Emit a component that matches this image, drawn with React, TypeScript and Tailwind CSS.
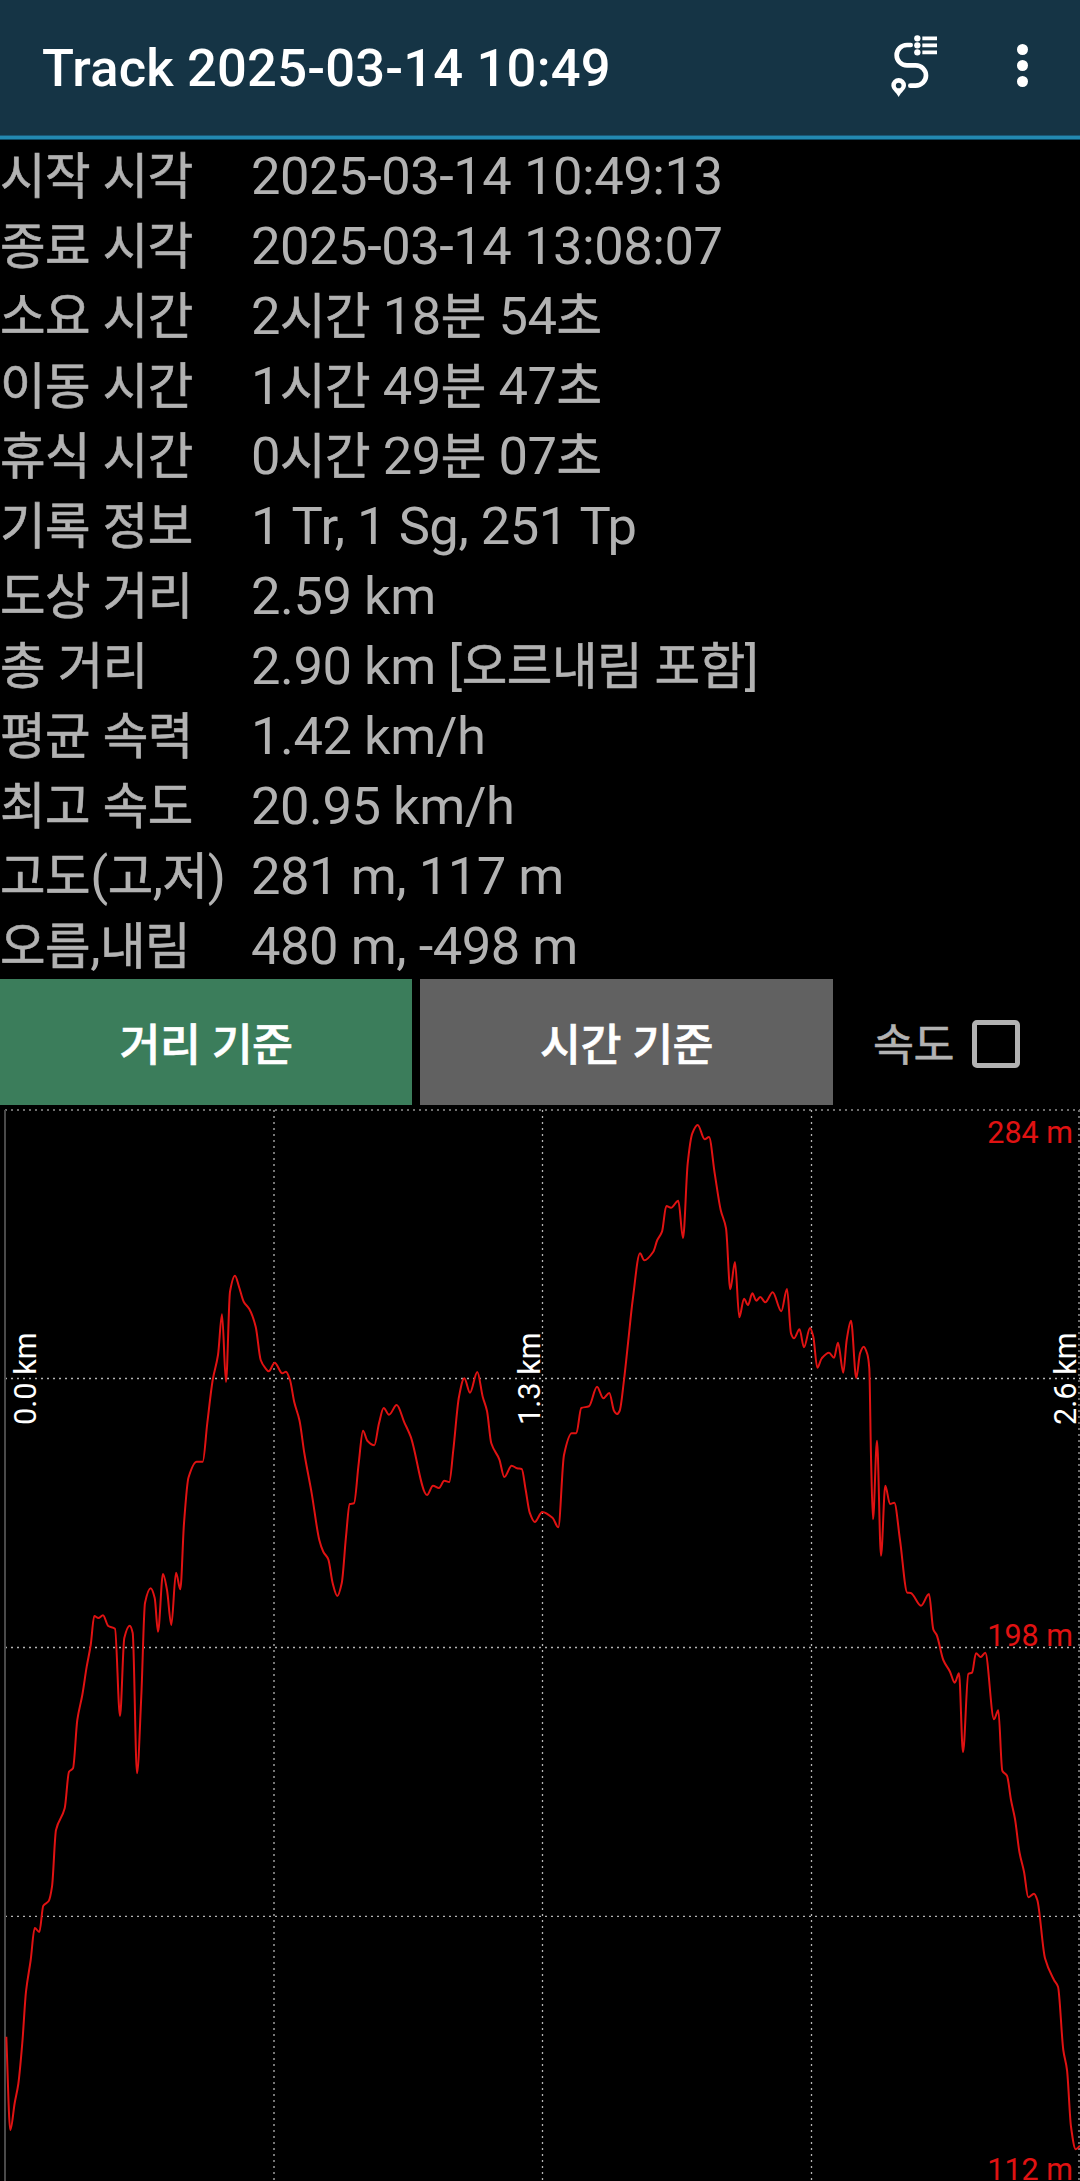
import React from "react";

type Point = [number, number];

const STATS: [string, string][] = [
  ["시작 시각", "2025-03-14 10:49:13"],
  ["종료 시각", "2025-03-14 13:08:07"],
  ["소요 시간", "2시간 18분 54초"],
  ["이동 시간", "1시간 49분 47초"],
  ["휴식 시간", "0시간 29분 07초"],
  ["기록 정보", "1 Tr, 1 Sg, 251 Tp"],
  ["도상 거리", "2.59 km"],
  ["총 거리", "2.90 km [오르내림 포함]"],
  ["평균 속력", "1.42 km/h"],
  ["최고 속도", "20.95 km/h"],
  ["고도(고,저)", "281 m, 117 m"],
  ["오름,내림", "480 m, -498 m"],
];

// Elevation samples along the track, in screen units; the chart starts at y = 1105.
const PROFILE: Point[] = [
  [6.3, 2036.7], [10.3, 2130], [14.7, 2103], [18.3, 2084], [22.3, 2043], [26, 1991.7], [30.7, 1960], [34.7, 1928],
  [39.3, 1932], [43.3, 1905.7], [48.7, 1901], [52, 1886.7], [56, 1830], [64.7, 1808.3], [69, 1771.7], [73, 1768.3],
  [77.3, 1720], [82.3, 1695], [86.7, 1666.7], [90.7, 1645], [94.3, 1616], [98.3, 1618], [103, 1615.3], [108.3, 1626],
  [115, 1628.7], [120, 1716], [124.3, 1638], [129.7, 1625.7], [132.7, 1633], [137, 1773.3], [141.3, 1696], [145, 1603],
  [150.7, 1588.3], [154.7, 1598], [158, 1631.7], [163, 1574], [167, 1590], [171.3, 1625], [176, 1572.7], [180.3, 1589.3],
  [184, 1523.3], [188.5, 1477.5], [196.7, 1461.7], [202.7, 1461.7], [207.3, 1423], [212.7, 1380], [218, 1355],
  [222, 1314.3], [226, 1382], [230, 1291.7], [235, 1275.7], [239, 1286.7], [243.7, 1301.7], [249.3, 1309],
  [255.7, 1326.7], [260.7, 1360], [265, 1367.7], [268.7, 1371.3], [274.7, 1362.7], [282.3, 1373.3], [286, 1371.7],
  [290, 1380], [294.3, 1402.3], [299.5, 1420.5], [304.3, 1453], [311.7, 1493.3], [319.3, 1540], [323.3, 1551.7],
  [328.3, 1559.3], [332.7, 1583.3], [337.3, 1596], [341.7, 1583.3], [346, 1536.7], [349.7, 1504], [354, 1503.3],
  [358.7, 1463.3], [363, 1430.7], [367.3, 1440.7], [374.3, 1445.3], [379, 1423.3], [383.7, 1408], [389, 1414.7],
  [396.7, 1405], [404.3, 1422.3], [410.7, 1436.7], [427, 1495], [433, 1485.7], [439, 1488], [444.3, 1480.7],
  [449.3, 1482], [453.3, 1450], [459, 1396.7], [464.3, 1378.3], [470, 1392.7], [477.3, 1372], [482.7, 1396.7],
  [487, 1411], [491.3, 1443.3], [499.3, 1459.3], [504.3, 1477], [511.7, 1465.7], [517, 1468.3], [521.7, 1469],
  [525.7, 1490], [529.7, 1512.7], [534.7, 1522], [542.3, 1512], [552.7, 1518], [558.3, 1527.3], [564, 1455],
  [571.7, 1433.3], [576.3, 1433.3], [581.3, 1408], [589, 1406.3], [597, 1386.7], [603.3, 1398.3], [609.3, 1393],
  [614, 1410.7], [617, 1414], [619.7, 1410.7], [624, 1380], [628, 1343.3], [632.7, 1300], [640, 1253.3],
  [644.3, 1260.3], [653.3, 1251.7], [657.3, 1240], [662, 1231.7], [666.3, 1206], [671, 1207.7], [678.3, 1200.7],
  [683, 1238], [687.7, 1163.3], [692.3, 1133.3], [697.7, 1125], [704.7, 1139.3], [709, 1137], [714.7, 1173.3],
  [720.7, 1210], [726, 1228.3], [730.3, 1289.3], [735, 1262], [739.3, 1317.3], [744, 1298.7], [748, 1305],
  [752.3, 1293.3], [756.3, 1300.7], [760.3, 1297], [765.3, 1302.3], [772.7, 1292.3], [781.3, 1311.3], [787, 1289],
  [791, 1333.3], [794, 1338.3], [799.5, 1329.3], [804, 1347.3], [810, 1328], [813.3, 1336.7], [817.3, 1367.7],
  [821.7, 1358.3], [829, 1352.7], [834, 1357.7], [838, 1342.7], [843.3, 1372.7], [846.7, 1340], [851, 1320.7],
  [856.3, 1378], [860, 1353.3], [863.7, 1346.7], [867.3, 1354], [869.3, 1368.3], [871, 1456.7], [873, 1519.3],
  [877, 1440.7], [881, 1555.7], [885.3, 1485.7], [890, 1504], [894.3, 1502.7], [900, 1540], [907.3, 1592.7],
  [910.7, 1593], [921, 1605.7], [929, 1594], [933.3, 1629.3], [936.7, 1635], [943.3, 1660], [950, 1671.7],
  [954.7, 1682.7], [959, 1673.3], [963, 1752.3], [968.3, 1674], [972, 1672.7], [976, 1653.3], [980.7, 1657],
  [985.3, 1652.7], [994, 1719.3], [998.3, 1710.3], [1002.3, 1770.7], [1007, 1775.7], [1011, 1800], [1015, 1819],
  [1019.5, 1852.5], [1024, 1871.7], [1028.3, 1897.3], [1034, 1893.7], [1037.3, 1900], [1045, 1958.3], [1054, 1980],
  [1058, 1986.7], [1063.3, 2050], [1067, 2070], [1071, 2126.7], [1075.7, 2149.3], [1080, 2145.7],
];

// Cubic path through all samples that never overshoots a local extreme.
function monotonePath(p: Point[]): string {
  const n = p.length;
  const slope = p.slice(1).map((q, i) => (q[1] - p[i][1]) / (q[0] - p[i][0]));
  const tangent = p.map((_, i) => {
    if (i === 0) return slope[0];
    if (i === n - 1) return slope[n - 2];
    const a = slope[i - 1];
    const b = slope[i];
    return a * b <= 0 ? 0 : (2 * a * b) / (a + b);
  });
  let d = `M${p[0][0]} ${p[0][1]}`;
  for (let i = 0; i < n - 1; i++) {
    const h = (p[i + 1][0] - p[i][0]) / 3;
    d += `C${p[i][0] + h} ${p[i][1] + tangent[i] * h} ${p[i + 1][0] - h} ${p[i + 1][1] - tangent[i + 1] * h} ${p[i + 1][0]} ${p[i + 1][1]}`;
  }
  return d;
}

// Sets Hangul runs slightly smaller and firmer than the Latin text beside them.
function Mixed({ text }: { text: string }) {
  return (
    <>
      {text.split(/([가-힣]+)/).map((part, i) =>
        i % 2 ? (
          <span key={i} className="text-[0.943em] [-webkit-text-stroke:0.6px_currentColor]">
            {part}
          </span>
        ) : (
          part
        ),
      )}
    </>
  );
}

function TrackIcon() {
  return (
    <svg className="h-[66px] w-[50px] overflow-visible" viewBox="0 0 150 198" fill="none">
      <path d="M77 45H66a31 30.500 0 0 0 0 61H92a31 30.500 0 0 1 0 61H76" stroke="#fff" strokeWidth="14" strokeLinecap="round" />
      <path d="M41 144a22 22 0 0 0-22 22c0 13 14 20 22 35 8-15 22-22 22-35a22 22 0 0 0-22-22zm0 14a8.500 8.500 0 1 1 0 17 8.500 8.500 0 0 1 0-17z" fill="#fff" fillRule="evenodd" />
      <circle cx="97" cy="25" r="9.500" fill="#fff" />
      <circle cx="97" cy="46" r="9.500" fill="#fff" />
      <circle cx="97" cy="67" r="9.500" fill="#fff" />
      <path d="M112 25h44M112 46h44M112 67h44" stroke="#fff" strokeWidth="11" />
    </svg>
  );
}

function Header() {
  return (
    <header className="bg-[#153445]">
      <div className="flex h-[135px] items-center pl-[42px]">
        <h1 className="flex-1 text-[52.5px] leading-[70px] font-medium tracking-[0.19px] text-white">
          Track 2025-03-14 10:49
        </h1>
        <button className="mr-[82px] mb-[9px]" aria-label="트랙 목록">
          <TrackIcon />
        </button>
        <button className="mr-[52px] mb-[4px] flex flex-col gap-[5px]" aria-label="메뉴">
          <span className="size-[11px] rounded-full bg-white" />
          <span className="size-[11px] rounded-full bg-white" />
          <span className="size-[11px] rounded-full bg-white" />
        </button>
      </div>
      <div className="h-[5px] border-y border-t-[#1b5876] border-b-[#0f4a63] bg-[#2389b1]" />
    </header>
  );
}

function Chart() {
  const red = "#e01212";
  return (
    <svg className="block h-[1076px] w-[1080px]" viewBox="0 1105 1080 1076">
      <g stroke="#b4b4b4" strokeWidth="1.300" strokeDasharray="2 4">
        <path d="M5 1378.500H1080M5 1647.500H1080M5 1916.300H1080" />
        <path d="M274 1110V2181M542.500 1110V2181M811.500 1110V2181" />
      </g>
      <g stroke="#6e6e6e" strokeWidth="2" strokeDasharray="2 4">
        <path d="M5 1110H1080M1079 1110V2181" />
      </g>
      <path d="M5 1110V2181" stroke="#4a4a4a" strokeWidth="2" />
      <path d={monotonePath(PROFILE)} fill="none" stroke={red} strokeWidth="2" strokeLinejoin="round" />
      <g fill={red} fontSize="30.500" textAnchor="end">
        <text x="1073" y="1143">284 m</text>
        <text x="1073" y="1646">198 m</text>
        <text x="1073" y="2180">112 m</text>
      </g>
      <g fill="#fff" fontSize="30.700">
        <text transform="translate(36 1425) rotate(-90)">0.0 km</text>
        <text transform="translate(540 1425) rotate(-90)">1.3 km</text>
        <text transform="translate(1076 1425) rotate(-90)">2.6 km</text>
      </g>
    </svg>
  );
}

export default function App() {
  return (
    <div className="h-[2181px] w-[1080px] overflow-hidden bg-black font-[Roboto,'Noto_Sans_CJK_KR',sans-serif]">
      <Header />
      <dl className="h-[839px] pt-px text-[52.5px] leading-[70px] tracking-[-0.47px] text-[#b2b2b2]">
        {STATS.map(([label, value]) => (
          <div key={label} className="flex h-[70px] whitespace-nowrap">
            <dt className="w-[251px]">
              <Mixed text={label} />
            </dt>
            <dd>
              <Mixed text={value} />
            </dd>
          </div>
        ))}
      </dl>
      <div className="flex h-[126px] items-center text-[47.25px] tracking-[-0.5px]">
        <button className="mr-2 h-full w-[412px] bg-[#3b7d5b] pt-1.5 font-medium text-white">
          <Mixed text="거리 기준" />
        </button>
        <button className="mr-[40px] h-full w-[413px] bg-[#616161] pt-1.5 font-medium text-white">
          <Mixed text="시간 기준" />
        </button>
        <label className="flex items-center text-[#b2b2b2]">
          <span className="w-[99px] pt-1.5">
            <Mixed text="속도" />
          </span>
          <span className="mt-1 size-[48px] rounded-[5px] border-5 border-[#b2b2b2]" />
        </label>
      </div>
      <Chart />
    </div>
  );
}
